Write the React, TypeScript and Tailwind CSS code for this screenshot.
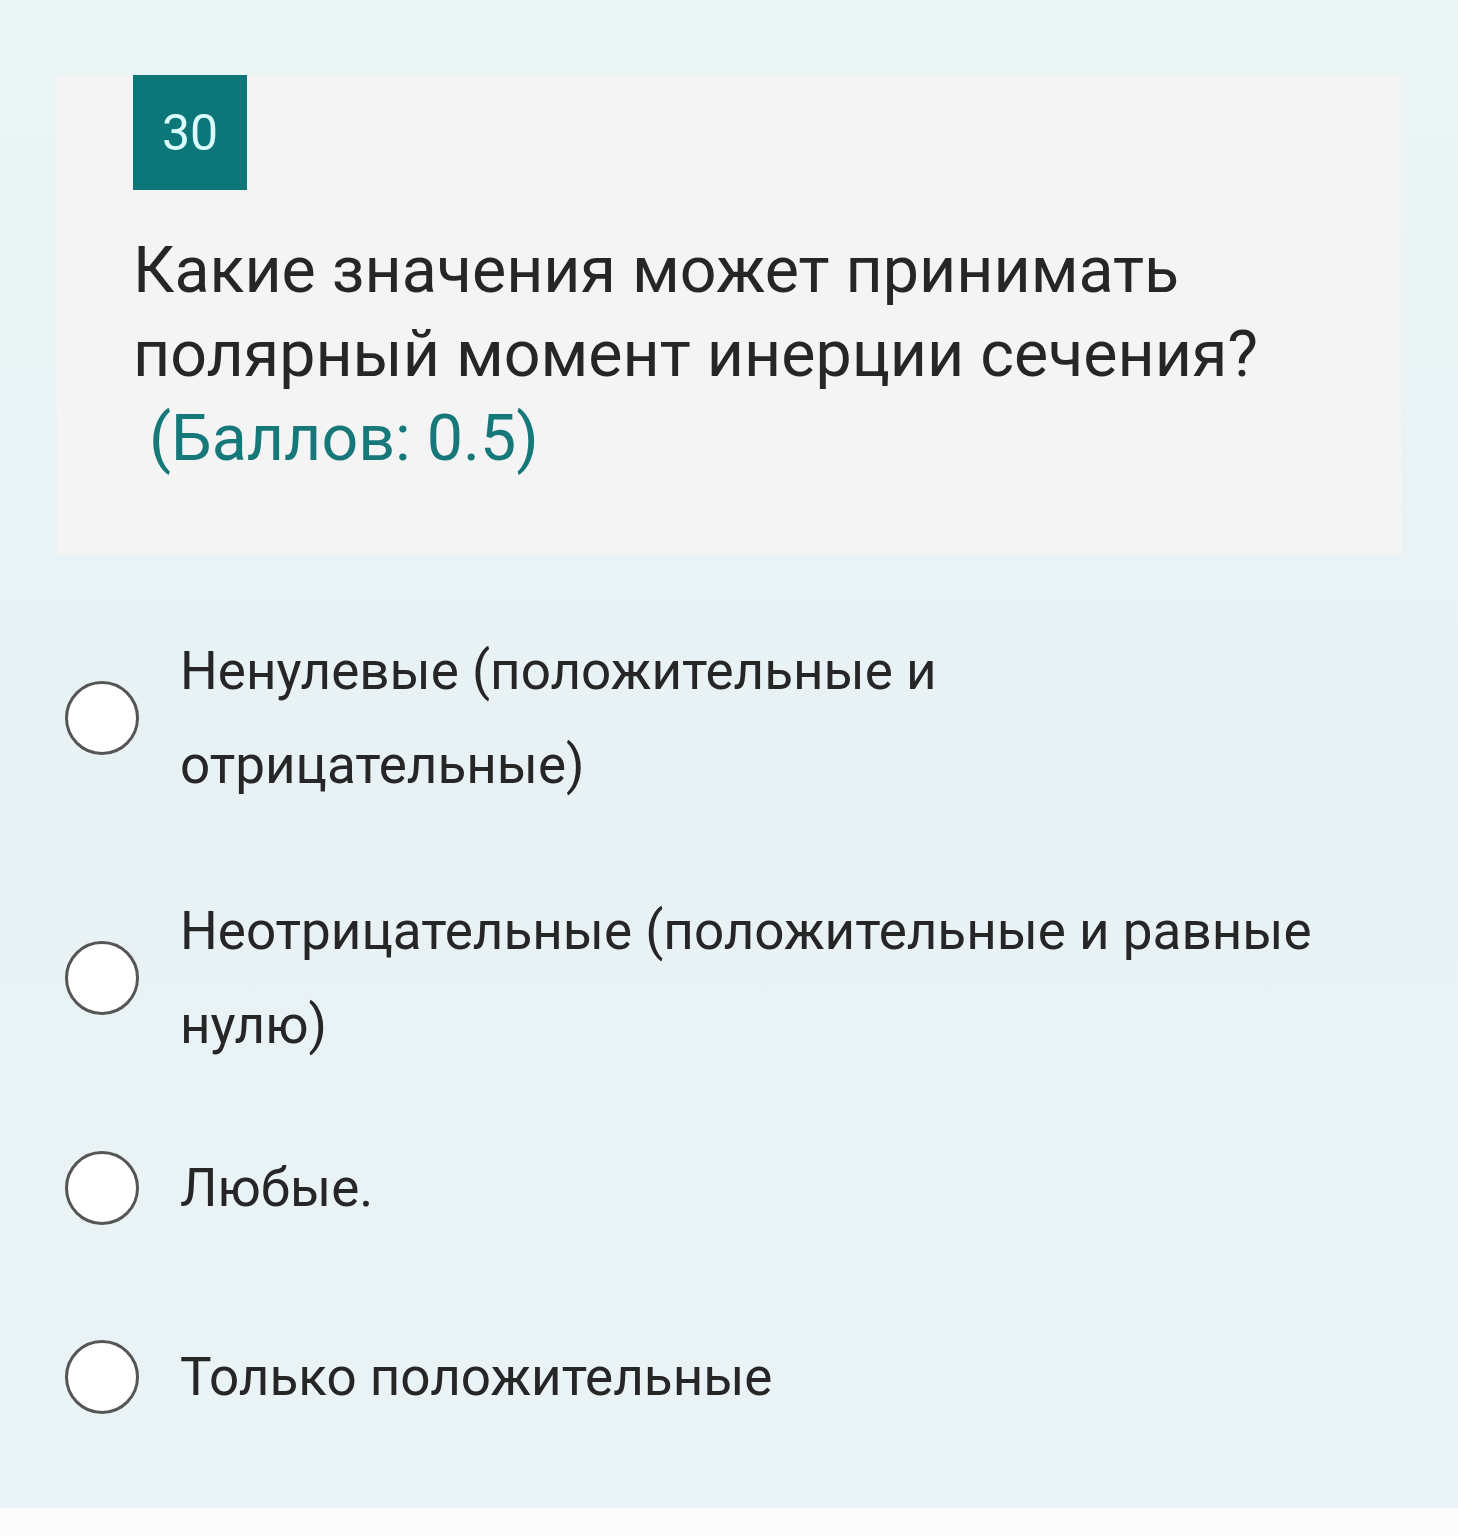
import React from 'react';

const options = [
  { id: 1, text: 'Ненулевые (положительные и отрицательные)', gap: 'mt-[69px]' },
  { id: 2, text: 'Неотрицательные (положительные и равные нулю)', gap: 'mt-[72px]' },
  { id: 3, text: 'Любые.', gap: 'mt-[69px]' },
  { id: 4, text: 'Только положительные', gap: 'mt-[95px]' },
];

const App = () => {
  return (
    <div
      className="min-h-[1536px] w-full flex flex-col bg-[#fbfbfb]"
      style={{ fontFamily: 'Roboto, "Noto Sans", sans-serif' }}
    >
      {/* ================= QUESTION AREA ================= */}
      <div className="h-[1508px] bg-gradient-to-b from-[#ebf5f6] via-[#e8f2f5] to-[#eaf3f5] pt-[75px] px-[57px]">
        {/* question card */}
        <div className="bg-[#f4f4f4] pl-[76px] pr-6 pb-[75px]">
          <div className="w-[114px] h-[115px] bg-[#0d7679] flex items-center justify-center">
            <span className="text-[#d9fbfb] text-[50px] leading-none">30</span>
          </div>

          <div className="mt-[38px] text-[64.5px] leading-[84px] text-[#262626]">
            <div>Какие значения может принимать полярный момент инерции сечения?</div>
            <div className="text-[#17787a]">{'\u00A0'}(Баллов: 0.5)</div>
          </div>
        </div>

        {/* answers */}
        <div className="pl-[8px]">
          {options.map((opt) => (
            <label key={opt.id} className={`${opt.gap} flex items-center gap-[41px]`}>
              <span className="shrink-0 w-[74px] h-[74px] rounded-full bg-white border-[3px] border-[#555555]" />
              <span className="w-[1150px] text-[53px] leading-[94px] text-[#262626]">{opt.text}</span>
            </label>
          ))}
        </div>
      </div>

      <div className="flex-1 bg-[#fbfbfb]" />
    </div>
  );
};

export default App;
